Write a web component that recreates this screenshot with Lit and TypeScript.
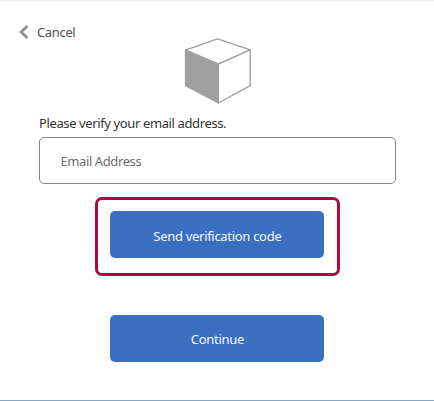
import { LitElement, html, css } from "lit";
import { customElement } from "lit/decorators.js";

@customElement("app-root")
export class AppRoot extends LitElement {
  static styles = css`
    :host {
      display: block;
      box-sizing: border-box;
      height: 401px;
      overflow: hidden;
      background: #fff;
      border-top: 1px solid #ebebeb;
      border-bottom: 1px solid #86a9c6;
      font-family: "Noto Sans", "Open Sans", sans-serif;
      font-size: 13px;
      color: #333;
    }
    * { box-sizing: border-box; }
    .page { display: flex; flex-direction: column; }
    .cancel {
      display: flex;
      align-items: center;
      gap: 8px;
      height: 20px;
      margin: 21px 0 0 19px;
      padding: 0;
      border: 0;
      background: none;
      font: inherit;
      letter-spacing: -0.35px;
      color: #505050;
    }
    .chevron { display: block; width: 10px; height: 14px; }
    .logo { display: block; width: 70px; height: 70px; margin: -6px 0 0 183px; }
    .label {
      height: 20px;
      line-height: 20px;
      margin: 7px 0 0 39px;
      letter-spacing: -0.38px;
      white-space: nowrap;
    }
    .email {
      width: 357px;
      height: 47px;
      margin: 4px 0 0 39px;
      padding: 0 20.5px;
      border: 1px solid #858585;
      border-radius: 5px;
      background: #fff;
      font: inherit;
      letter-spacing: -0.4px;
      outline: none;
    }
    .email::placeholder { color: #6e6e6e; opacity: 1; }
    .highlight {
      width: 245px;
      height: 79px;
      margin: 13px 0 0 95.4px;
      padding: 11px 12px;
      border: 3px solid #ac0844;
      border-radius: 7px;
    }
    .button {
      display: block;
      width: 214px;
      height: 47px;
      padding: 0;
      border: 0;
      border-radius: 5px;
      background: #3b6fc0;
      color: #f4f7fc;
      font: inherit;
      letter-spacing: -0.3px;
    }
    .send { padding-top: 2px; }
    .continue { margin: 39px 0 0 110.4px; }
  `;

  render() {
    return html`
      <main class="page">
        <button class="cancel">
          <svg class="chevron" viewBox="0 0 10 14" fill="none" stroke="#919191" stroke-width="2.8">
            <path d="M8.4 1.1 2.1 7l6.3 5.9" />
          </svg>
          <span>Cancel</span>
        </button>
        <svg class="logo" viewBox="183 36 70 70" stroke="#a0a0a0" stroke-width="1.4" stroke-linejoin="round">
          <path fill="#fff" d="M185.6 50.2 217.6 38.8 250.2 49.8 218.3 64.2Z" />
          <path fill="#fff" d="M218.3 64.2 250.2 49.8V85.7L218.3 103Z" />
          <path fill="#a0a0a0" d="M185.6 50.2 218.3 64.2V103L185.6 85.7Z" />
        </svg>
        <div class="label">Please verify your email address.</div>
        <input class="email" type="email" placeholder="Email Address" aria-label="Email Address" />
        <div class="highlight"><button class="button send">Send verification code</button></div>
        <button class="button continue">Continue</button>
      </main>
    `;
  }
}
